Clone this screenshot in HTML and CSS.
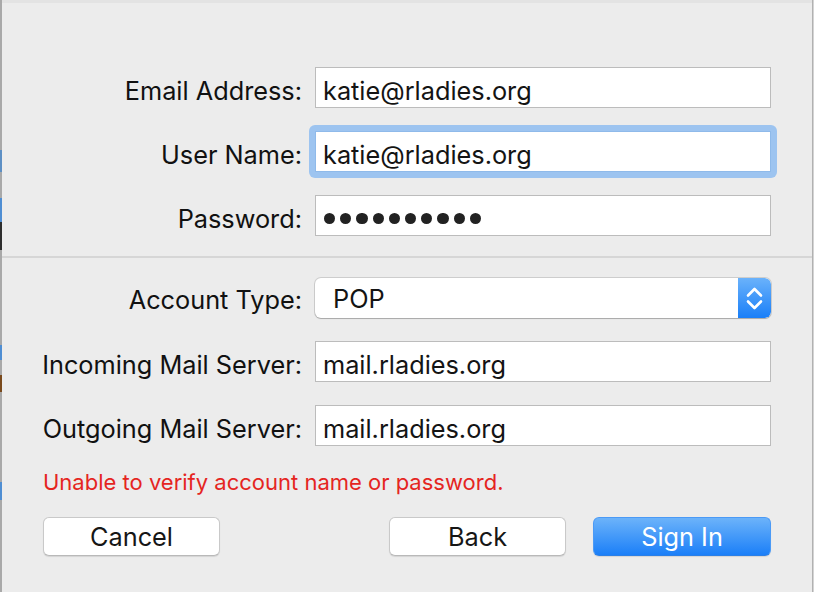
FILE: index.html
```html
<!DOCTYPE html>
<html lang="en">
<head>
<meta charset="utf-8">
<title>Add Account</title>
<link rel="stylesheet" href="styles.css">
</head>
<body>
<div class="window">
  <div class="edge-left"></div>
  <div class="sheet">
    <div class="topline"></div>
    <form class="form">
      <div class="grid first">
        <label class="label">Email Address:</label>
        <div class="field">katie@rladies.org</div>
        <label class="label">User Name:</label>
        <div class="field focused">katie@rladies.org</div>
        <label class="label">Password:</label>
        <div class="field password">
          <span class="dot"></span><span class="dot"></span><span class="dot"></span><span class="dot"></span><span class="dot"></span><span class="dot"></span><span class="dot"></span><span class="dot"></span><span class="dot"></span><span class="dot"></span>
        </div>
      </div>
      <div class="separator"></div>
      <div class="grid">
        <label class="label popup-label">Account Type:</label>
        <div class="popup">
          <span class="popup-value">POP</span>
          <span class="stepper">
            <svg width="33" height="40" viewBox="0 0 33 40" aria-hidden="true">
              <path d="M10 17.5 L16.5 11 L23 17.5" fill="none" stroke="#fff" stroke-width="2.6" stroke-linecap="round" stroke-linejoin="round"/>
              <path d="M10 23.5 L16.5 30 L23 23.5" fill="none" stroke="#fff" stroke-width="2.6" stroke-linecap="round" stroke-linejoin="round"/>
            </svg>
          </span>
        </div>
        <label class="label">Incoming Mail Server:</label>
        <div class="field">mail.rladies.org</div>
        <label class="label">Outgoing Mail Server:</label>
        <div class="field">mail.rladies.org</div>
      </div>
      <p class="error">Unable to verify account name or password.</p>
      <div class="buttons">
        <button type="button" class="btn">Cancel</button>
        <button type="button" class="btn back">Back</button>
        <button type="button" class="btn primary">Sign In</button>
      </div>
    </form>
  </div>
  <div class="edge-right"></div>
</div>
</body>
</html>
```
FILE: styles.css
```css
* { box-sizing: border-box; }
html, body { margin: 0; padding: 0; }
body {
  background: #ececec;
  font-family: Inter, "Liberation Sans", Arial, sans-serif;
  color: #161616;
}
.window {
  display: flex;
  height: 592px;
  width: 814px;
  background: #ececec;
  overflow: hidden;
}
.edge-left {
  width: 2px;
  flex: none;
  background: linear-gradient(to bottom,
    #a9a9a9 0, #a9a9a9 150px,
    #5d8fc4 150px, #5d8fc4 172px,
    #a9a9a9 172px, #a9a9a9 198px,
    #4f8ed3 198px, #4f8ed3 222px,
    #2e2e2e 222px, #2e2e2e 250px,
    #a9a9a9 250px, #a9a9a9 345px,
    #4f8ed3 345px, #4f8ed3 360px,
    #a9a9a9 360px, #a9a9a9 375px,
    #7a4a1c 375px, #7a4a1c 392px,
    #a9a9a9 392px, #a9a9a9 482px,
    #4f8ed3 482px, #4f8ed3 500px,
    #a9a9a9 500px);
}
.edge-right {
  width: 2px;
  flex: none;
  background: linear-gradient(to right, #b1b1b1 0, #b1b1b1 1px, #d4d4d4 1px);
}
.sheet {
  flex: 1;
  position: relative;
  z-index: 0;
  display: flex;
  flex-direction: column;
}
.topline { height: 3px; background: #e3e3e3; }
.form { margin: 0; display: flex; flex-direction: column; }
.grid {
  display: grid;
  grid-template-columns: 300px 456px;
  column-gap: 13px;
  row-gap: 23px;
  align-items: start;
}
.grid.first { margin-top: 64px; }
.label {
  text-align: right;
  font-size: 25.3px;
  line-height: 30px;
  padding-top: 9px;
  color: #111;
  white-space: nowrap;
}
.label.popup-label { padding-top: 7px; }
.field {
  position: relative;
  height: 41px;
  border: 1px solid #bcbcbc;
  background: #fff;
  padding: 8px 0 0 7px;
  font-size: 25.3px;
  line-height: 30px;
  color: #141414;
  white-space: nowrap;
}
.field.focused { border-color: #8fbaea; }
.field.focused::before {
  content: "";
  position: absolute;
  inset: -7px;
  border-radius: 6px;
  background: #9dc4f0;
  z-index: -1;
}
.field.password {
  display: flex;
  align-items: center;
  gap: 5px;
  padding: 6px 0 0 8px;
}
.dot {
  width: 11.2px;
  height: 11.2px;
  border-radius: 50%;
  background: #222;
  flex: none;
}
.separator {
  height: 2px;
  background: #d6d6d6;
  margin: 20px 0 20px;
}
.popup {
  height: 40px;
  display: flex;
  justify-content: space-between;
  background: #fff;
  border-radius: 6px;
  box-shadow: 0 0 0 1px rgba(0,0,0,0.13), 0 1px 1px rgba(0,0,0,0.18);
  overflow: hidden;
}
.popup-value {
  font-size: 25.3px;
  line-height: 30px;
  padding: 6px 0 0 18px;
  color: #141414;
}
.stepper {
  width: 33px;
  height: 40px;
  display: block;
  background: linear-gradient(to bottom, #6ab2fb, #1a7ff8);
  border-radius: 0 6px 6px 0;
}
.stepper svg { display: block; }
.error {
  margin: 23px 0 0 41px;
  font-size: 22px;
  line-height: 26px;
  color: #e5251f;
}
.buttons {
  display: flex;
  margin-top: 22px;
  padding: 0 41px;
}
.btn {
  width: 177px;
  height: 39px;
  flex: none;
  margin: 0;
  padding: 0;
  display: flex;
  align-items: center;
  justify-content: center;
  font-family: inherit;
  font-size: 25.3px;
  line-height: 30px;
  color: #161616;
  background: #fff;
  border: 1px solid #c9c9c9;
  border-bottom-color: #b9b9b9;
  border-radius: 6px;
  box-shadow: 0 1px 1px rgba(0,0,0,0.1);
}
.btn.back { margin-left: auto; }
.btn.primary {
  width: 178px;
  margin-left: 27px;
  color: #fff;
  background: linear-gradient(to bottom, #6cb3fa, #1b7ff8);
  border: 1px solid #4b9af6;
  border-bottom-color: #2b7fe6;
}
```
